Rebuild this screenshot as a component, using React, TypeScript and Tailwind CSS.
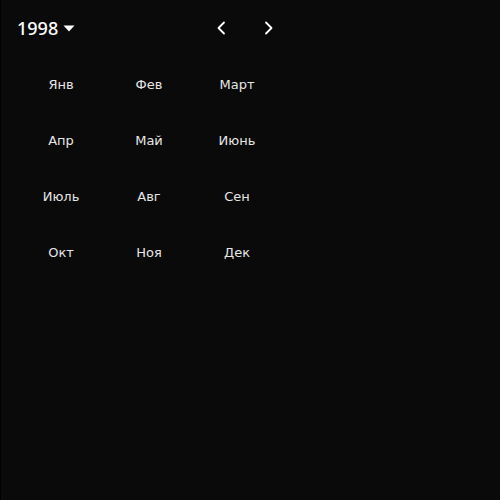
import React from "react";

const months = ["Янв", "Фев", "Март", "Апр", "Май", "Июнь", "Июль", "Авг", "Сен", "Окт", "Ноя", "Дек"];

export default function App() {
  return (
    <div className="w-[500px] h-[500px] bg-[#0a0a0a] border-l border-black text-white overflow-hidden">
      <div className="w-[264px] ml-[16px]">
        <div className="h-14 flex items-center">
          <div className="flex items-center gap-[5px]">
            <span className="text-[18px] leading-none font-medium text-white" style={{ fontFamily: '"Noto Sans", sans-serif' }}>1998</span>
            <svg width="12" height="7" viewBox="0 0 12 7" className="mt-[1px]">
              <path d="M0.5 0.5 L11.5 0.5 L6 6.5 Z" fill="white" />
            </svg>
          </div>
          <div className="ml-auto flex items-center gap-6">
            <button className="w-6 h-6 flex items-center justify-center">
              <svg width="24" height="24" viewBox="0 0 24 24" fill="none" stroke="white" strokeWidth="1.8" strokeLinecap="round" strokeLinejoin="round">
                <path d="M15 6.5 L9.5 12 L15 17.5" />
              </svg>
            </button>
            <button className="w-6 h-6 flex items-center justify-center">
              <svg width="24" height="24" viewBox="0 0 24 24" fill="none" stroke="white" strokeWidth="1.8" strokeLinecap="round" strokeLinejoin="round">
                <path d="M9 6.5 L14.5 12 L9 17.5" />
              </svg>
            </button>
          </div>
        </div>
        <div className="grid grid-cols-3">
          {months.map((m) => (
            <div key={m} className="h-14 pt-[2px] flex items-center justify-center text-[13px] text-[#e6e6e6]" style={{ fontFamily: '"DejaVu Sans", sans-serif' }}>
              {m}
            </div>
          ))}
        </div>
      </div>
    </div>
  );
}
